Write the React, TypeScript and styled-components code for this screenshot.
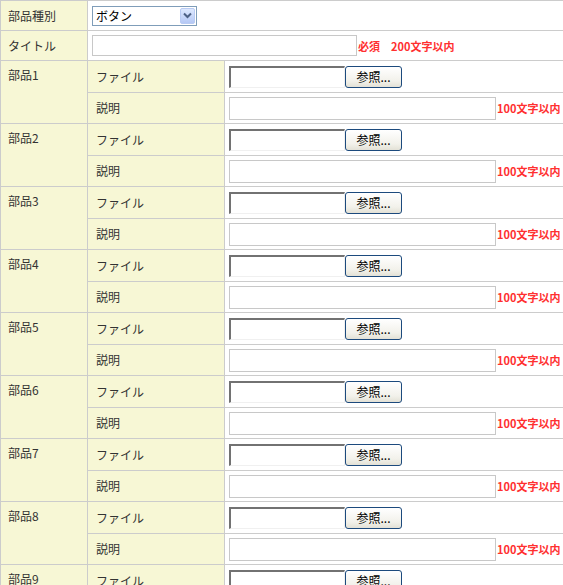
import styled, { createGlobalStyle } from "styled-components";

const GlobalStyle = createGlobalStyle`
  html, body {
    margin: 0;
    padding: 0;
    background: #fff;
    overflow: hidden;
  }
  body {
    font-family: "Noto Sans CJK JP", "Liberation Sans", sans-serif;
    font-size: 12px;
    color: #333;
  }
`;

const Table = styled.table`
  border-collapse: collapse;
  width: 600px;
  table-layout: fixed;
`;

const Row = styled.tr<{ $h: number }>`
  height: ${(p) => p.$h}px;
`;

const Cell = styled.td<{ $pad?: string }>`
  border: 1px solid #ccc;
  padding: ${(p) => p.$pad ?? "0 4px"};
  vertical-align: middle;
  white-space: nowrap;
  line-height: 14px;
`;

const Label = styled(Cell)`
  background: #f7f7d5;
  padding: 0 7px;
`;

const PartLabel = styled(Label)`
  vertical-align: top;
  padding-top: 7px;
`;

const SubLabel = styled(Label)`
  padding: 0 8px;
`;

const Line = styled.div`
  display: flex;
  align-items: center;
`;

const FakeSelect = styled.div`
  box-sizing: border-box;
  width: 105px;
  height: 20px;
  border: 1px solid #7f9db9;
  display: flex;
  align-items: center;
  justify-content: space-between;
  padding: 1px 1px 1px 3px;
  background: #fff;
  color: #000;
`;

const DropButton = styled.div`
  width: 15px;
  height: 16px;
  border-radius: 2px;
  background: linear-gradient(#dde8fe, #b5c8f5);
  border: 1px solid #b9cbf3;
  box-sizing: border-box;
  display: flex;
  align-items: center;
  justify-content: center;
`;

const TextBox = styled.div<{ $w: number; $h: number }>`
  box-sizing: border-box;
  width: ${(p) => p.$w}px;
  height: ${(p) => p.$h}px;
  border: 1px solid #c8c8c8;
  background: #fff;
`;

const FileBox = styled.div`
  box-sizing: border-box;
  width: 116px;
  height: 22px;
  border-top: 2px solid #727272;
  border-left: 2px solid #727272;
  border-bottom: 1px solid #f0f0f0;
  border-right: 1px solid #f0f0f0;
  background: #fff;
`;

const BrowseButton = styled.div`
  box-sizing: border-box;
  width: 57px;
  height: 22px;
  border: 1px solid #1c4a7d;
  border-radius: 3px;
  background: linear-gradient(#ffffff, #f2f1ea 70%, #e3e1d6);
  color: #000;
  display: flex;
  align-items: center;
  justify-content: center;
  font-size: 12px;
`;

const Note = styled.span`
  color: #ff3030;
  font-weight: bold;
  font-size: 11px;
  margin-left: 1px;
`;

const parts = [1, 2, 3, 4, 5, 6, 7, 8, 9];

export default function App() {
  return (
    <>
      <GlobalStyle />
      <Table>
        <colgroup>
          <col style={{ width: 87 }} />
          <col style={{ width: 137 }} />
          <col />
        </colgroup>
        <tbody>
          <Row $h={30}>
            <Label>部品種別</Label>
            <Cell colSpan={2}>
              <FakeSelect>
                <span>ボタン</span>
                <DropButton>
                  <svg width="9" height="7" viewBox="0 0 9 7">
                    <path d="M1 1.5 L4.5 5 L8 1.5" fill="none" stroke="#4d6185" strokeWidth="2" />
                  </svg>
                </DropButton>
              </FakeSelect>
            </Cell>
          </Row>
          <Row $h={30}>
            <Label>タイトル</Label>
            <Cell colSpan={2}>
              <Line>
                <TextBox $w={265} $h={21} />
                <Note>必須　200文字以内</Note>
              </Line>
            </Cell>
          </Row>
          {parts.map((n) => (
            <Part key={n} n={n} />
          ))}
        </tbody>
      </Table>
    </>
  );
}

function Part({ n }: { n: number }) {
  return (
    <>
      <Row $h={32}>
        <PartLabel rowSpan={2}>部品{n}</PartLabel>
        <SubLabel>ファイル</SubLabel>
        <Cell>
          <Line>
            <FileBox />
            <BrowseButton>参照...</BrowseButton>
          </Line>
        </Cell>
      </Row>
      <Row $h={31}>
        <SubLabel>説明</SubLabel>
        <Cell>
          <Line>
            <TextBox $w={267} $h={23} />
            <Note>100文字以内</Note>
          </Line>
        </Cell>
      </Row>
    </>
  );
}
